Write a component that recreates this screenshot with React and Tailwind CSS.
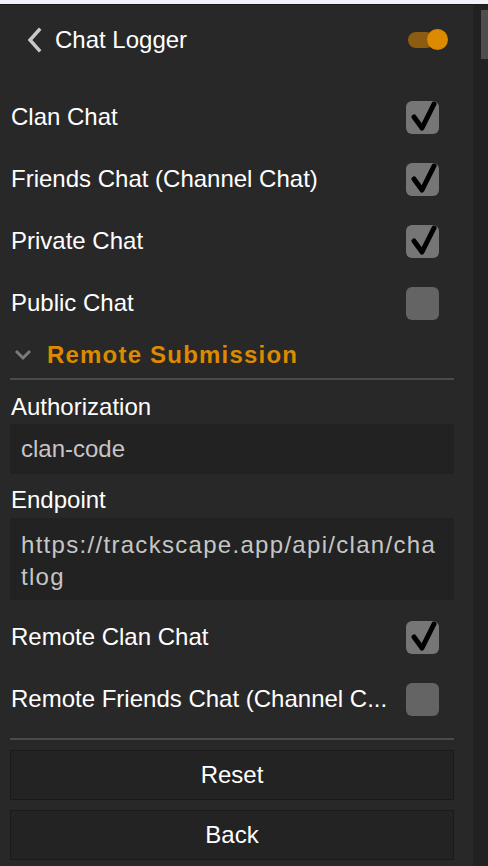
import React from "react";

const font = { fontFamily: '"Liberation Sans", Arial, sans-serif' };

function Checkbox({ checked }) {
  return (
    <div
      className={`relative w-[33px] h-[33px] rounded-[6px] shrink-0 ${
        checked ? "bg-[#767676]" : "bg-[#646464]"
      }`}
    >
      {checked && (
        <svg
          className="absolute left-0 top-0"
          width="33"
          height="33"
          viewBox="0 0 33 33"
        >
          <path
            d="M8 16 L16 27 L28 3"
            fill="none"
            stroke="#000"
            strokeWidth="5"
            strokeLinecap="round"
            strokeLinejoin="round"
          />
        </svg>
      )}
    </div>
  );
}

function Row({ label, checked }) {
  return (
    <div className="h-[62px] flex items-center">
      <div className="flex-1 min-w-0 whitespace-nowrap pl-[1px] mr-[8px] text-white text-[24px] leading-[30px]">
        {label}
      </div>
      <div className="mr-[15px]">
        <Checkbox checked={checked} />
      </div>
    </div>
  );
}

export default function App() {
  return (
    <div className="w-[488px] h-[866px] bg-[#282828] flex flex-col overflow-hidden" style={font}>
      <div className="h-[4px] bg-[#f2f0f8] shrink-0" />
      <div className="h-px bg-[#1a1a1a] shrink-0" />
      <div className="flex flex-1 min-h-0">
        <div className="flex-1 min-w-0 pl-[10px] pr-[19px]">
          {/* header */}
          <div className="h-[70px] flex items-center">
            <svg width="18" height="26" viewBox="0 0 18 26" className="ml-[15px]">
              <path
                d="M14 3 L5 13 L14 23"
                fill="none"
                stroke="#c8c8c8"
                strokeWidth="3.5"
                strokeLinecap="square"
              />
            </svg>
            <div className="ml-[12px] text-white text-[24px] leading-[30px] flex-1">
              Chat Logger
            </div>
            <div className="relative w-[40px] h-[22px] mr-[6px]">
              <div className="absolute left-0 top-[3px] w-[26px] h-[16px] rounded-full bg-[#8c5c10]" />
              <div className="absolute right-0 top-0 w-[21px] h-[21px] rounded-full bg-[#dc8a00]" />
            </div>
          </div>

          <div className="pt-[11px]">
            <Row label="Clan Chat" checked />
            <Row label="Friends Chat (Channel Chat)" checked />
            <Row label="Private Chat" checked />
            <Row label="Public Chat" checked={false} />
          </div>

          {/* section header */}
          <div className="h-[42px] flex items-center">
            <svg width="20" height="12" viewBox="0 0 20 12" className="ml-[3px]">
              <path
                d="M3 2 L10 9 L17 2"
                fill="none"
                stroke="#7a7a7a"
                strokeWidth="3"
              />
            </svg>
            <div className="ml-[14px] text-[#dc8a00] text-[24px] font-bold tracking-[1.2px] leading-[30px]">
              Remote Submission
            </div>
          </div>
          <div className="mt-[2px] h-[2px] bg-[#4a4a4a]" />

          <div className="mt-[13px] h-[28px] leading-[28px] pl-[1px] text-white text-[24px]">
            Authorization
          </div>
          <div className="mt-[3px] h-[50px] bg-[#222222] flex items-center pl-[11px] text-[#c6c6c6] text-[24px]">
            clan-code
          </div>

          <div className="mt-[12px] h-[28px] leading-[28px] pl-[1px] text-white text-[24px]">
            Endpoint
          </div>
          <div className="mt-[4px] h-[82px] bg-[#222222] pl-[11px] pt-[11px] text-[#c6c6c6] text-[24px] leading-[32px] tracking-[1.3px]">
            https://trackscape.app/api/clan/cha
            <br />
            tlog
          </div>

          <div className="mt-[6px]">
            <Row label="Remote Clan Chat" checked />
            <Row label="Remote Friends Chat (Channel C..." checked={false} />
          </div>

          <div className="mt-[8px] h-[2px] bg-[#4a4a4a]" />

          <div className="mt-[10px] h-[50px] bg-[#232323] border border-[#1a1a1a] flex items-center justify-center text-white text-[24px]">
            Reset
          </div>
          <div className="mt-[10px] h-[50px] bg-[#232323] border border-[#1a1a1a] flex items-center justify-center text-white text-[24px]">
            Back
          </div>
        </div>

        {/* scrollbar */}
        <div className="w-[15px] bg-[#212121] shrink-0">
          <div className="ml-[8px] mt-[5px] w-[7px] h-[49px] bg-[#4e4e4e]" />
        </div>
      </div>
    </div>
  );
}
